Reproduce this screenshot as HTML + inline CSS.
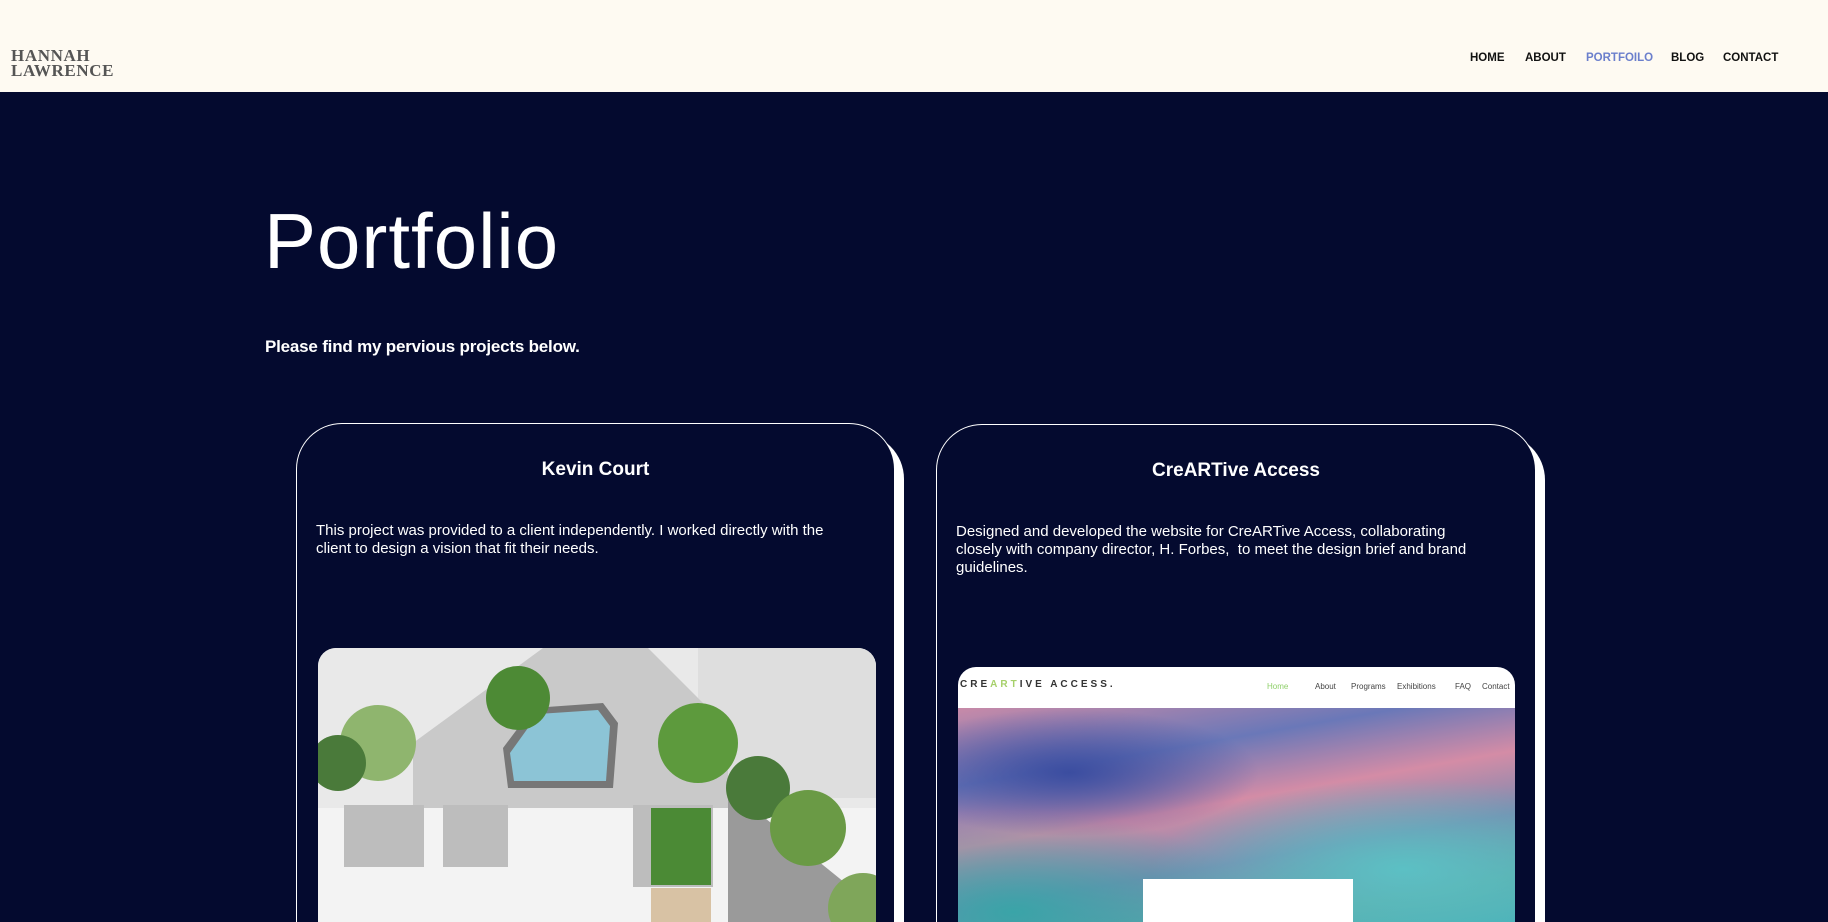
<!DOCTYPE html>
<html><head><meta charset="utf-8"><style>
*{margin:0;padding:0;box-sizing:border-box}
html,body{width:1828px;height:922px;overflow:hidden}
body{background:#040a2f;font-family:"Liberation Sans",sans-serif;position:relative}
#wrap{position:absolute;left:0;top:0;width:1828px;height:922px;overflow:hidden}
.hdr{position:absolute;left:0;top:0;width:1828px;height:92px;background:#fefaf2}
.logo{position:absolute;left:11px;top:48px;font-family:"Liberation Serif",serif;font-weight:bold;font-size:17px;line-height:15px;color:#555;letter-spacing:0.6px}
.nav{position:absolute;top:52px;font-size:11.5px;font-weight:bold;color:#111}
h1{position:absolute;left:264px;top:202px;font-size:78px;font-weight:normal;color:#fff;line-height:1;letter-spacing:1px}
.sub{position:absolute;left:265px;top:337px;font-size:17px;font-weight:bold;color:#fff;letter-spacing:-0.2px}
.shadow{position:absolute;background:#fff;border-radius:46px 46px 0 0}
.card{position:absolute;background:#040a2f;border:1px solid #fff;border-bottom:none;border-radius:46px 46px 0 0;overflow:hidden}
.card h2{position:absolute;width:100%;text-align:center;font-size:19px;font-weight:bold;color:#fff}
.card p{position:absolute;left:19px;font-size:15px;line-height:18px;color:#fff}
.img{position:absolute;border-radius:18px 18px 0 0;overflow:hidden}
.cn{position:absolute;top:15px;font-size:8px;color:#444}
</style></head><body><div id="wrap">
<div class="hdr">
<div class="logo">HANNAH<br>LAWRENCE</div>
<div class="nav" style="left:1470px">HOME</div>
<div class="nav" style="left:1525px">ABOUT</div>
<div class="nav" style="left:1586px;color:#6b7fcc">PORTFOILO</div>
<div class="nav" style="left:1671px">BLOG</div>
<div class="nav" style="left:1723px">CONTACT</div>
</div>
<h1>Portfolio</h1>
<div class="sub">Please find my pervious projects below.</div>

<div class="shadow" style="left:306px;top:433px;width:598px;height:489px"></div>
<div class="card" style="left:296px;top:423px;width:599px;height:499px">
<h2 style="top:35px">Kevin Court</h2>
<p style="top:98px;width:545px">This project was provided to a client independently. I worked directly with the client to design a vision that fit their needs.</p>
<div class="img" style="left:21px;top:224px;width:558px;height:275px;background:#e8e8e8">
<svg width="558" height="275" viewBox="0 0 558 275">
<rect width="558" height="275" fill="#e9e9e9"/>
<rect x="380" y="0" width="178" height="150" fill="#dedede"/>
<polygon points="95,95 225,0 330,0 410,80 410,160 95,160" fill="#c9c9c9"/>
<polygon points="185,100 215,60 285,55 300,75 295,140 190,140" fill="#777"/>
<polygon points="192,105 220,66 280,62 292,78 288,133 196,133" fill="#8cc4d6"/>
<rect x="0" y="160" width="558" height="115" fill="#f3f3f3"/>
<rect x="26" y="157" width="80" height="62" fill="#bdbdbd"/>
<rect x="125" y="157" width="65" height="62" fill="#bdbdbd"/>
<rect x="315" y="157" width="80" height="82" fill="#bdbdbd"/>
<rect x="333" y="160" width="60" height="77" fill="#4b8a35"/>
<rect x="333" y="240" width="60" height="35" fill="#d8c2a4"/>
<polygon points="410,140 558,260 558,275 410,275" fill="#9a9a9a"/>
<circle cx="60" cy="95" r="38" fill="#8fb56e"/>
<circle cx="20" cy="115" r="28" fill="#4a7a3a"/>
<circle cx="200" cy="50" r="32" fill="#4d8a35"/>
<circle cx="380" cy="95" r="40" fill="#5d9a3d"/>
<circle cx="440" cy="140" r="32" fill="#4a7a3a"/>
<circle cx="490" cy="180" r="38" fill="#6a9a45"/>
<circle cx="545" cy="260" r="35" fill="#7fa65a"/>
</svg></div>
</div>

<div class="shadow" style="left:946px;top:434px;width:599px;height:488px"></div>
<div class="card" style="left:936px;top:424px;width:600px;height:498px">
<h2 style="top:35px">CreARTive Access</h2>
<p style="top:98px;width:532px">Designed and developed the website for CreARTive Access, collaborating closely with company director, H. Forbes,&nbsp; to meet the design brief and brand guidelines.</p>
<div class="img" style="left:21px;top:242px;width:557px;height:256px;background:#fff">
<div style="position:absolute;left:2px;top:12px;font-size:10px;letter-spacing:3px;font-weight:bold;color:#333">CRE<span style="color:#a6d06a">ART</span>IVE ACCESS.</div>
<div class="cn" style="left:309px;color:#8fd06a">Home</div>
<div class="cn" style="left:357px">About</div>
<div class="cn" style="left:393px">Programs</div>
<div class="cn" style="left:439px">Exhibitions</div>
<div class="cn" style="left:497px">FAQ</div>
<div class="cn" style="left:524px">Contact</div>
<div style="position:absolute;left:0;top:41px;width:557px;height:215px;background:linear-gradient(170deg,#c88aa8 0%,#6a78b8 25%,#d48ca6 45%,#7a8ab0 65%,#5aaaa8 85%,#48b0b8 100%)"></div>
<div style="position:absolute;left:0;top:41px;width:557px;height:215px;background:radial-gradient(ellipse at 80% 75%,#5cc0c4 0,transparent 40%),radial-gradient(ellipse at 20% 30%,#3b4da0 0,transparent 30%),radial-gradient(ellipse at 10% 95%,#3aa4a8 0,transparent 35%)"></div>
<div style="position:absolute;left:185px;top:212px;width:210px;height:44px;background:#fff"></div>
</div>
</div>
</div></body></html>
